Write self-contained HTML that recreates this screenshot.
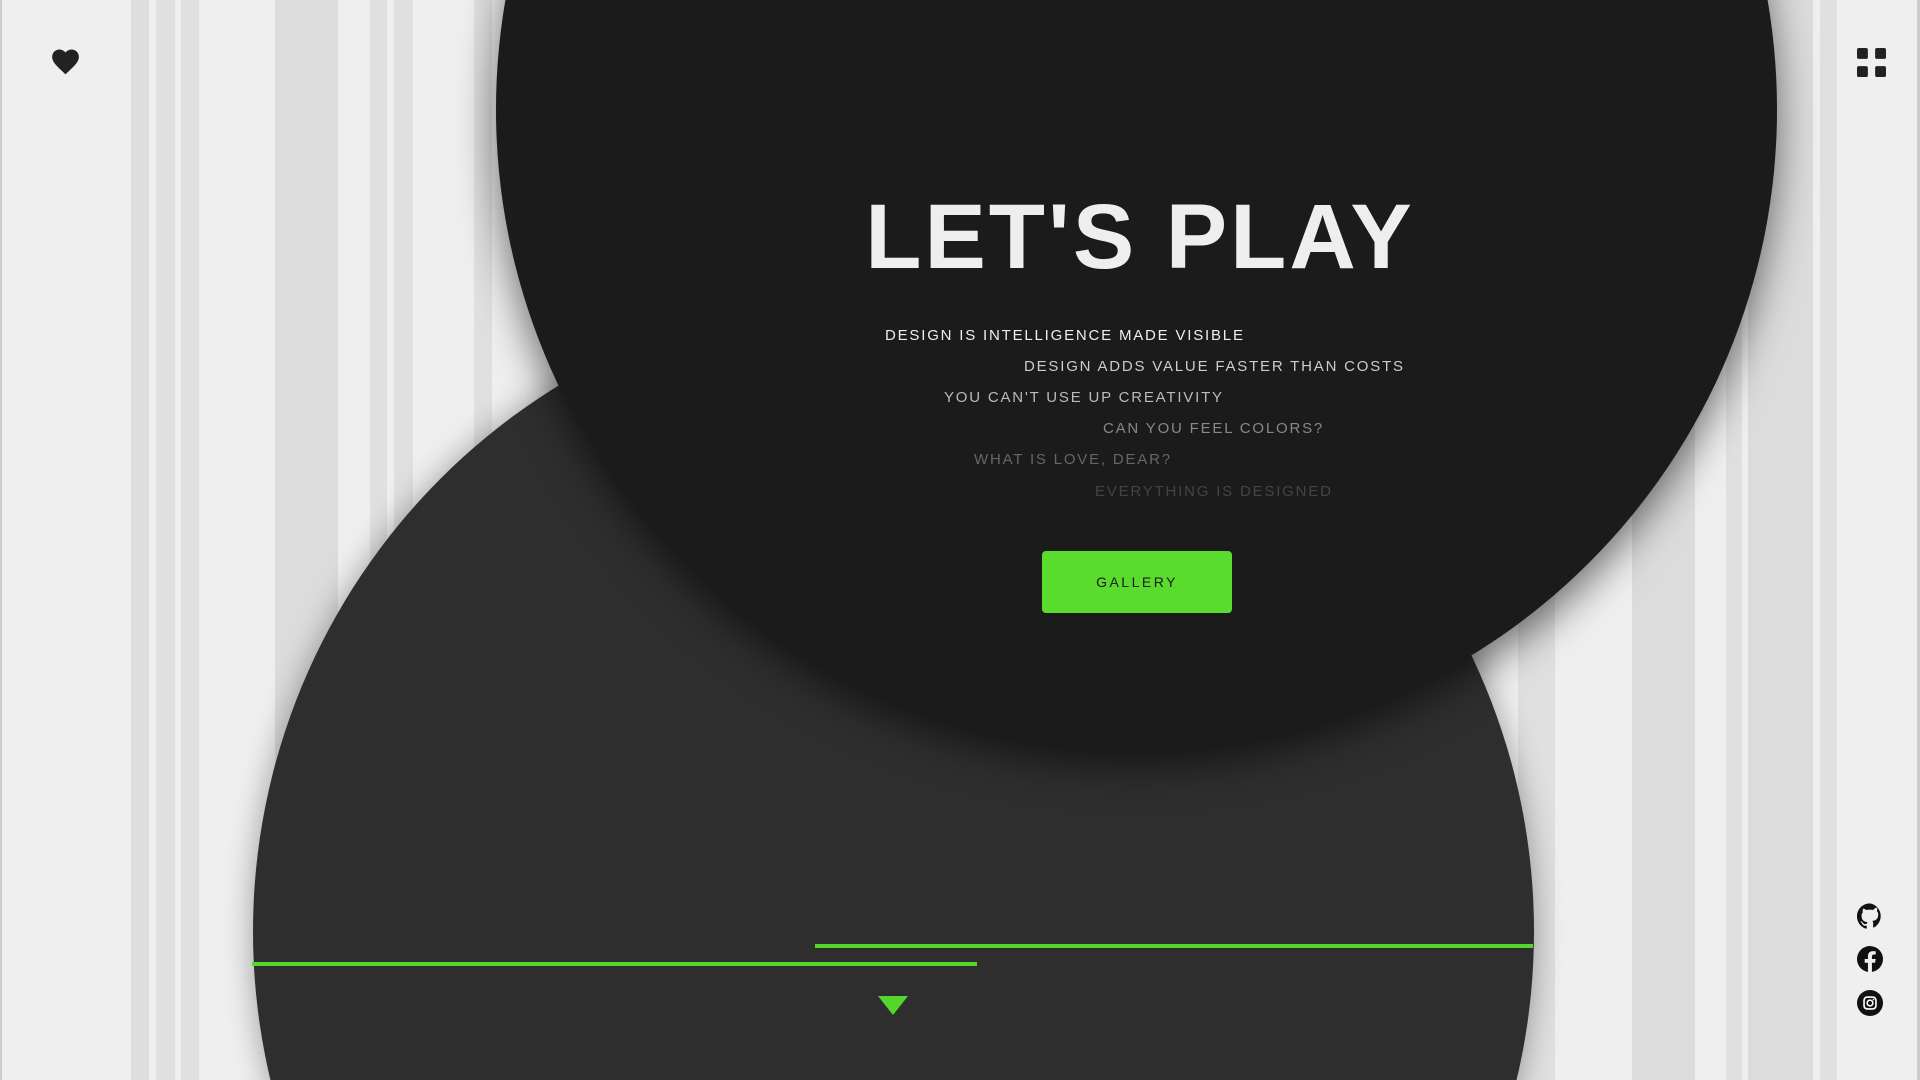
<!DOCTYPE html>
<html><head><meta charset="utf-8"><style>
*{margin:0;padding:0;box-sizing:border-box}
html,body{width:1920px;height:1080px;overflow:hidden}
body{background:#efefef;font-family:"Liberation Sans",sans-serif}
#w{position:relative;width:1920px;height:1080px;overflow:hidden}
.s{position:absolute;top:0;height:1080px;background:#e0e0e0}
.c{position:absolute;border-radius:50%}
.t{position:absolute;font-size:15px;letter-spacing:1.8px;white-space:nowrap}
</style></head><body><div id="w">
<div class="s" style="left:131px;width:18px;background:#dedede"></div>
<div class="s" style="left:156px;width:19px"></div>
<div class="s" style="left:181px;width:18px"></div>
<div class="s" style="left:275px;width:63px;background:#dcdcdc"></div>
<div class="s" style="left:370px;width:17px"></div>
<div class="s" style="left:394px;width:19px"></div>
<div class="s" style="left:474px;width:18px"></div>
<div class="s" style="left:1518px;width:37px"></div>
<div class="s" style="left:1632px;width:63px;background:#dcdcdc"></div>
<div class="s" style="left:1726px;width:16px"></div>
<div class="s" style="left:1748px;width:65px;background:#dcdcdc"></div>
<div class="s" style="left:1820px;width:17px"></div>
<div class="s" style="left:1917px;width:3px;background:#ccc"></div>
<div class="s" style="left:0;width:2px;background:#ccc"></div>

<div class="c" style="left:253px;top:291px;width:1281px;height:1281px;background:#2e2e2e;box-shadow:0 0 30px rgba(0,0,0,.35)"></div>
<div style="position:absolute;left:252px;top:962px;width:725px;height:4px;background:#55d62b"></div>
<div style="position:absolute;left:815px;top:944px;width:718px;height:4px;background:#55d62b"></div>
<svg style="position:absolute;left:878px;top:996px" width="30" height="20"><polygon points="0,0 30,0 15,19" fill="#55d62b"/></svg>

<div class="c" style="left:496px;top:-531px;width:1281px;height:1281px;background:#1b1b1b;box-shadow:0 15px 40px rgba(0,0,0,.55)"></div>

<div style="position:absolute;left:840px;top:182px;width:600px;text-align:center;color:#eee;font-weight:bold;font-size:92px;letter-spacing:3px;line-height:110px">LET'S PLAY</div>
<div class="t" style="left:885px;top:327px;color:#eee">DESIGN IS INTELLIGENCE MADE VISIBLE</div>
<div class="t" style="left:1024px;top:358px;color:#ccc">DESIGN ADDS VALUE FASTER THAN COSTS</div>
<div class="t" style="left:944px;top:389px;color:#bbb">YOU CAN'T USE UP CREATIVITY</div>
<div class="t" style="left:1103px;top:420px;color:#888">CAN YOU FEEL COLORS?</div>
<div class="t" style="left:974px;top:451px;color:#666">WHAT IS LOVE, DEAR?</div>
<div class="t" style="left:1095px;top:483px;color:#444">EVERYTHING IS DESIGNED</div>
<div style="position:absolute;left:1042px;top:551px;width:190px;height:62px;background:#5adc2e;border-radius:4px;color:#1b1b1b;font-size:14px;letter-spacing:2.5px;text-align:center;line-height:62px">GALLERY</div>

<svg style="position:absolute;left:50px;top:47px" width="31" height="28" viewBox="0 0 24 22"><path d="M12 21.5 10.5 20C5 15 1.5 11.8 1.5 7.8 1.5 4.6 4 2 7.2 2c1.8 0 3.6.9 4.8 2.3C13.2 2.9 15 2 16.8 2 20 2 22.5 4.6 22.5 7.8c0 4-3.5 7.2-9 12.2z" fill="#222"/></svg>
<svg style="position:absolute;left:1857px;top:48px" width="29" height="29" viewBox="0 0 24 24" fill="#222"><rect x="0" y="0" width="9" height="9" rx="1.5"/><rect x="15" y="0" width="9" height="9" rx="1.5"/><rect x="0" y="15" width="9" height="9" rx="1.5"/><rect x="15" y="15" width="9" height="9" rx="1.5"/></svg>

<svg style="position:absolute;left:1857px;top:903px" width="26" height="26" viewBox="0 0 24 24"><path fill="#111" d="M12 .3a12 12 0 0 0-3.8 23.4c.6.1.8-.3.8-.6v-2.2c-3.3.7-4-1.4-4-1.4-.6-1.4-1.4-1.8-1.4-1.8-1-.7.1-.7.1-.7 1.2.1 1.8 1.2 1.8 1.2 1 1.800 2.8 1.3 3.5 1 .1-.8.4-1.3.7-1.6-2.7-.3-5.5-1.3-5.5-6 0-1.2.5-2.3 1.2-3.1-.1-.4-.5-1.600.1-3.2 0 0 1-.3 3.3 1.2a11.5 11.5 0 0 1 6 0C17.3 4 18.3 4.300 18.3 4.300c.7 1.600.2 2.800.1 3.200.8.8 1.2 1.9 1.2 3.1 0 4.6-2.8 5.6-5.5 5.9.4.4.8 1.1.8 2.2v3.3c0 .3.2.7.8.6A12 12 0 0 0 12 .3"/></svg>
<svg style="position:absolute;left:1857px;top:946px" width="26" height="26" viewBox="0 0 24 24"><path fill="#111" d="M24 12a12 12 0 1 0-13.9 11.9v-8.4H7.1V12h3V9.4c0-3 1.8-4.7 4.5-4.7 1.3 0 2.7.2 2.7.2v3h-1.5c-1.5 0-2 .9-2 1.9V12h3.4l-.5 3.5h-2.9v8.4A12 12 0 0 0 24 12z"/></svg>
<svg style="position:absolute;left:1857px;top:990px" width="26" height="26" viewBox="0 0 24 24"><circle cx="12" cy="12" r="12" fill="#111"/><rect x="6.5" y="6.5" width="11" height="11" rx="3" fill="none" stroke="#fff" stroke-width="1.5"/><circle cx="12" cy="12" r="2.6" fill="none" stroke="#fff" stroke-width="1.5"/><circle cx="15.2" cy="8.8" r=".8" fill="#fff"/></svg>
</div></body></html>
